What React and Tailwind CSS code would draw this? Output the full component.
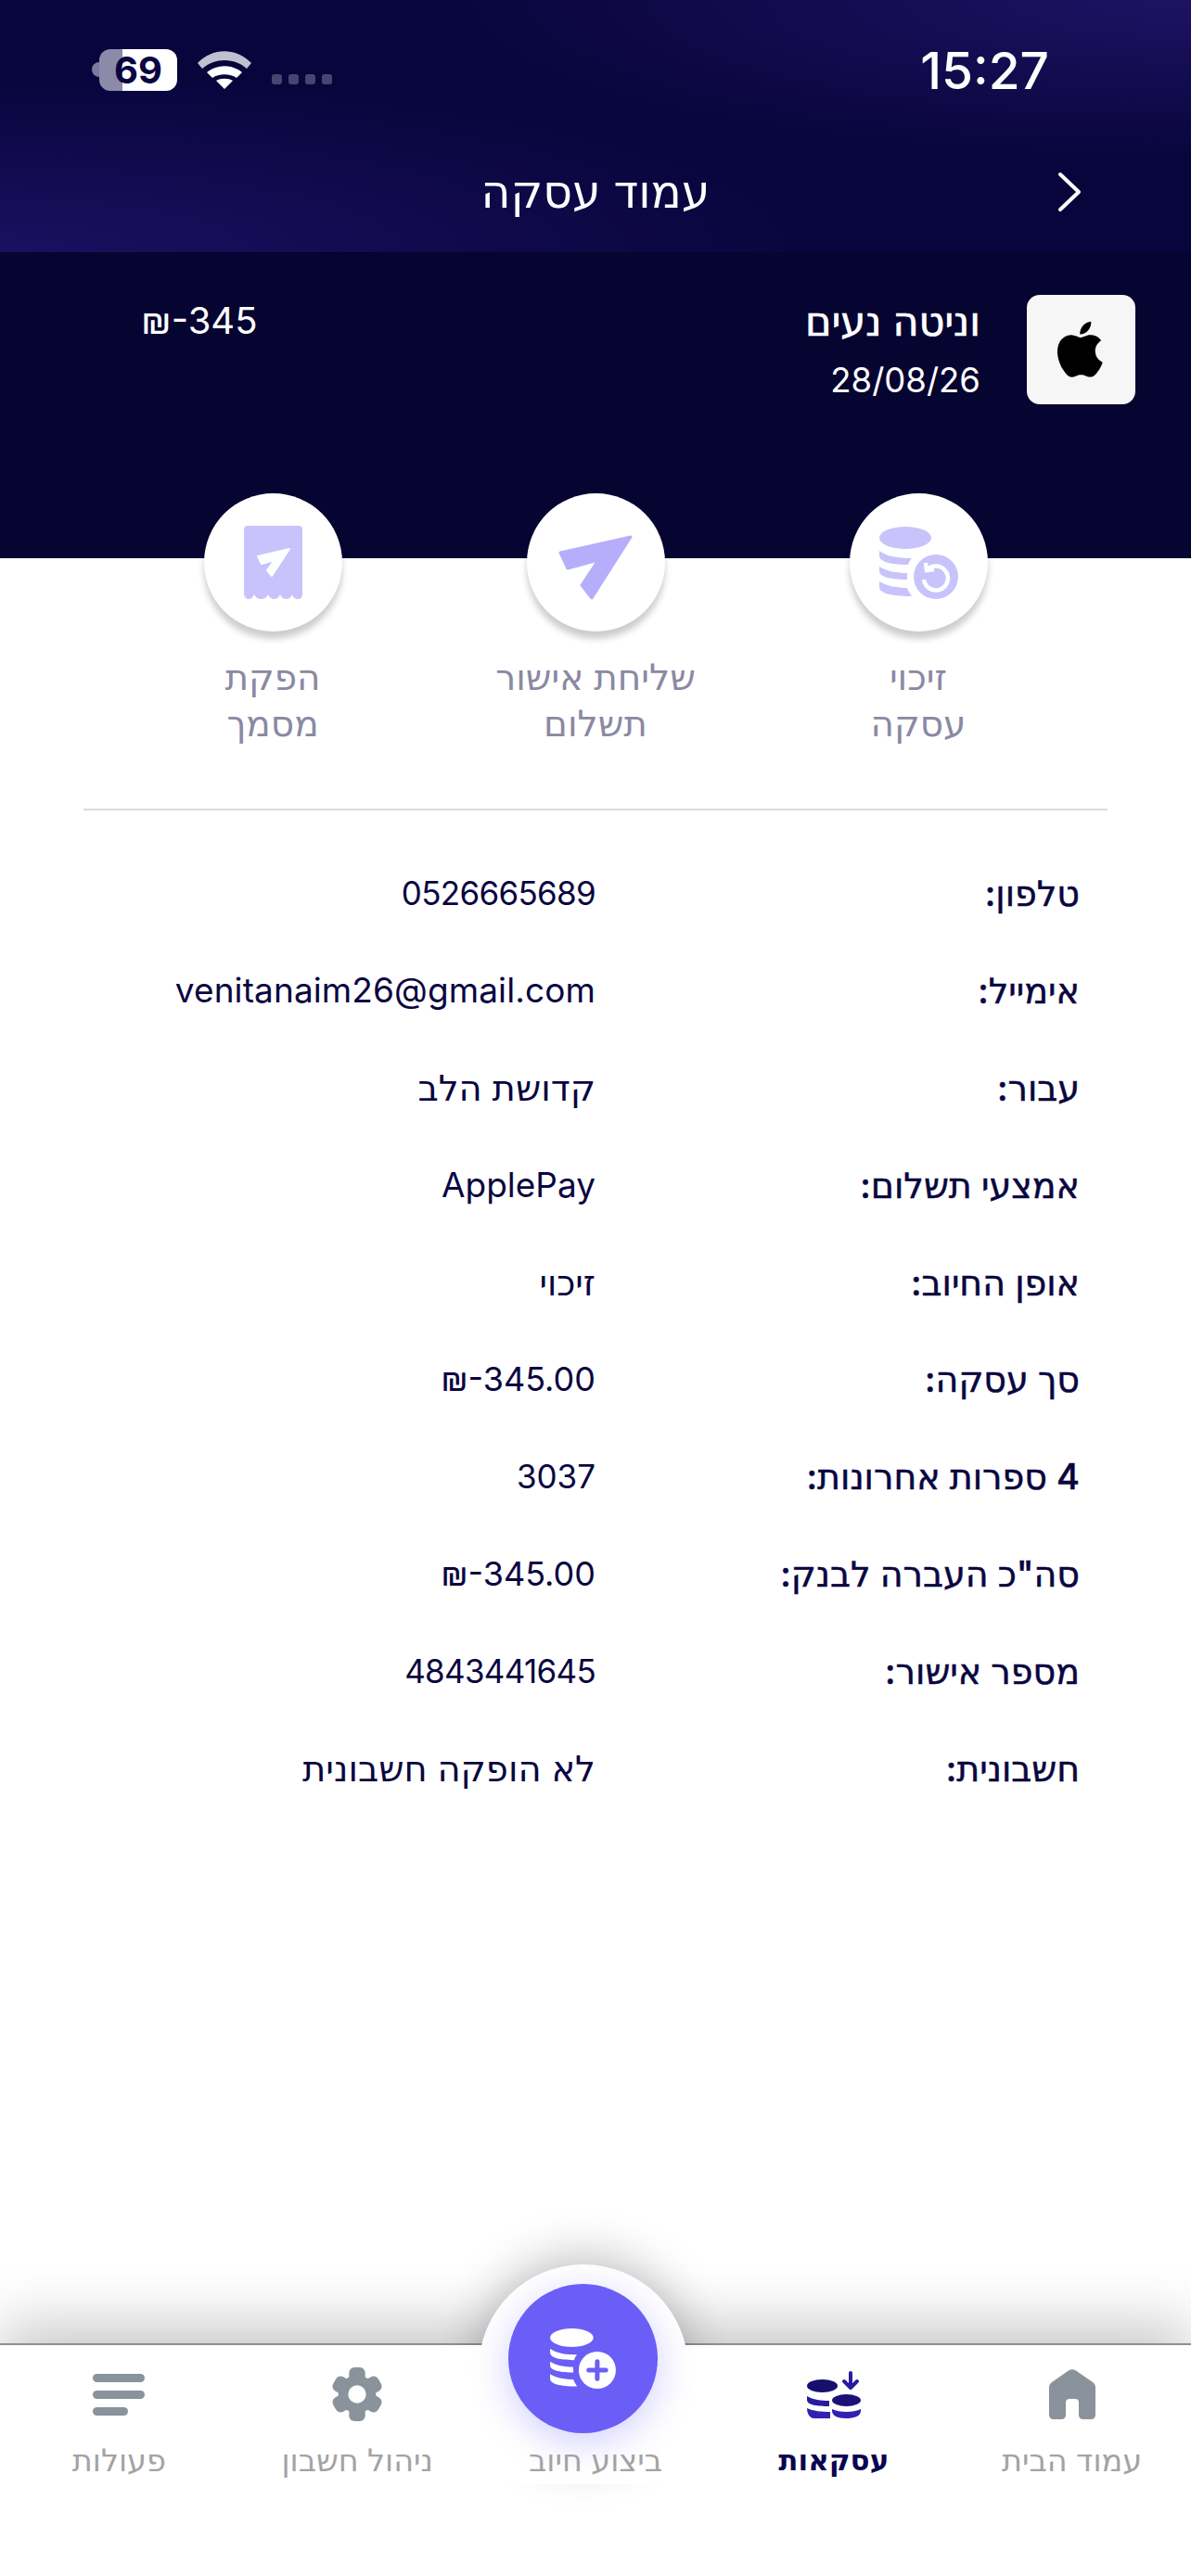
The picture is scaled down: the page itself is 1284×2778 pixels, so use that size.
import React from 'react';

const rows = [
  ['טלפון:', '0526665689', 'text-[35px] tracking-[-0.7px]'],
  ['אימייל:', 'venitanaim26@gmail.com', 'text-[37px] tracking-[0.1px]'],
  ['עבור:', 'קדושת הלב', 'text-[38.5px]'],
  ['אמצעי תשלום:', 'ApplePay', 'text-[37px]'],
  ['אופן החיוב:', 'זיכוי', 'text-[38px]'],
  ['סך עסקה:', '₪-345.00', 'text-[36px]'],
  ['4 ספרות אחרונות:', '3037', 'text-[35px]'],
  ['סה"כ העברה לבנק:', '₪-345.00', 'text-[36px]'],
  ['מספר אישור:', '4843441645', 'text-[35px] tracking-[-0.7px]'],
  ['חשבונית:', 'לא הופקה חשבונית', 'text-[38.5px]'],
];

function CoinsIcon({ color, className, children }) {
  return (
    <svg viewBox="0 0 85 78" className={className} fill={color}>
      <ellipse cx="28" cy="12" rx="28" ry="12" />
      <path d="M0 26C8 32 20 34 35 34c-2 2-3 4-4 7C16 41 0 39 0 31z" />
      <path d="M0 43c8 5 18 7 30 7v7C16 57 0 55 0 48z" />
      <path d="M0 59c8 5 20 7 30 7 1 3 3 6 5 9C18 75 0 73 0 65z" />
      {children}
    </svg>
  );
}

function Action({ icon, lines }) {
  return (
    <div className="w-[230px] flex flex-col items-center">
      <div className="w-[149px] h-[149px] rounded-full bg-white flex items-center justify-center shadow-[0_8px_7px_rgba(0,0,0,0.2)]">
        {icon}
      </div>
      <div className="mt-[24px] text-center text-[39px] leading-[50px] whitespace-nowrap text-[#8a89a3]">
        {lines.map((line) => (
          <div key={line}>{line}</div>
        ))}
      </div>
    </div>
  );
}

function NavItem({ icon, label, active }) {
  return (
    <div className="w-[257px] flex flex-col items-center">
      <div className="h-[60px] flex items-center justify-center">{icon}</div>
      <div className={active ? 'mt-[21px] text-[31px] leading-[40px] font-bold text-[#0b0550]' : 'mt-[21px] text-[33.5px] leading-[40px] text-[#a3a3a3]'}>
        {label}
      </div>
    </div>
  );
}

export default function App() {
  return (
    <div dir="rtl" className="relative w-[1284px] h-[2778px] overflow-hidden bg-white flex flex-col font-['Inter','DejaVu_Sans',sans-serif]">
      <div className="h-[272px] bg-[#08053c] bg-[radial-gradient(ellipse_at_top_right,#1e1263_0%,transparent_45%),radial-gradient(ellipse_at_bottom_left,#1a1060_0%,transparent_50%)] text-white">
        <div dir="ltr" className="h-[150px] pl-[99px] pr-[153px] flex items-center justify-between">
          <div className="flex items-center">
            <div className="w-[8px] h-[16px] rounded-l-full bg-[#7c7a9c]" />
            <div className="w-[84px] h-[45px] rounded-[12px] bg-[linear-gradient(to_right,#8b8aa8_25px,white_25px)] flex items-center justify-center">
              <span className="text-[40px] leading-[45px] font-bold text-[#0a0640]">69</span>
            </div>
            <svg viewBox="0 0 58 41" className="w-[58px] h-[41px] ml-[22px]" fill="white">
              <path opacity="0.75" d="M0 13C16 -4 42 -4 58 13l-5 6C39 7 19 7 5 19z" />
              <path d="M10 23c11-9 27-9 38 0l-6 6c-7-5-19-5-26 0z" />
              <path d="M20 32c5-3 13-3 18 0L29 41z" />
            </svg>
            <div className="flex gap-[7px] ml-[22px] mt-[21px]">
              <div className="w-[11px] h-[11px] rounded-[3px] bg-[#47446f]" />
              <div className="w-[11px] h-[11px] rounded-[3px] bg-[#47446f]" />
              <div className="w-[11px] h-[11px] rounded-[3px] bg-[#47446f]" />
              <div className="w-[11px] h-[11px] rounded-[3px] bg-[#47446f]" />
            </div>
          </div>
          <div className="mt-[3px] text-[55px] font-medium">15:27</div>
        </div>
        <div className="relative h-[114px] flex items-center justify-center">
          <span className="text-[49px] leading-[60px]">עמוד עסקה</span>
          <svg viewBox="0 0 26 44" className="absolute right-[118px] top-[35px] w-[26px] h-[44px]" fill="none" stroke="white" strokeWidth="4" strokeLinecap="round" strokeLinejoin="round">
            <path d="M3 3l20 19L3 41" />
          </svg>
        </div>
      </div>

      <div className="h-[330px] bg-[#060430] text-white pt-[46px] pr-[60px] pl-[152px] flex justify-between items-start">
        <div className="flex gap-[50px]">
          <div className="w-[117px] h-[118px] rounded-[14px] bg-[#f6f6f6] flex items-center justify-center">
            <svg viewBox="0 0 24 24" className="w-[70px] h-[70px]" fill="black">
              <path d="M17.05 12.54c-.03-2.6 2.12-3.85 2.22-3.91-1.21-1.77-3.09-2.01-3.76-2.04-1.6-.16-3.12.94-3.93.94-.81 0-2.06-.92-3.39-.89-1.74.03-3.35 1.01-4.25 2.57-1.81 3.14-.46 7.8 1.3 10.35.86 1.25 1.89 2.65 3.24 2.6 1.3-.05 1.79-.84 3.36-.84 1.57 0 2.01.84 3.39.81 1.4-.02 2.28-1.27 3.14-2.53.99-1.45 1.4-2.85 1.42-2.92-.03-.01-2.72-1.04-2.74-4.14zM14.46 4.9c.72-.87 1.2-2.07 1.07-3.27-1.03.04-2.28.69-3.02 1.55-.66.77-1.24 2-1.09 3.17 1.15.09 2.32-.58 3.04-1.45z" />
            </svg>
          </div>
          <div className="w-[190px]">
            <div className="text-[43px] leading-[56px] whitespace-nowrap [-webkit-text-stroke:0.7px_white]">וניטה נעים</div>
            <div dir="ltr" className="text-right mt-[11px] text-[36.5px] leading-[50px]">28/08/26</div>
          </div>
        </div>
        <div dir="ltr" className="text-[40px] leading-[56px]">₪-345</div>
      </div>

      <div className="-mt-[70px] relative flex justify-center gap-[118px]">
        <Action
          lines={['זיכוי', 'עסקה']}
          icon={
            <CoinsIcon color="#c8c3fb" className="w-[85px] h-[78px]">
              <circle cx="61" cy="54" r="24" />
              <g fill="none" stroke="white" strokeWidth="4.5">
                <path d="M52 46A13 13 0 1 1 48 57" />
                <path d="M50 39l1 8 8-1" />
              </g>
            </CoinsIcon>
          }
        />
        <Action
          lines={['שליחת אישור', 'תשלום']}
          icon={
            <svg viewBox="0 0 80 70" className="w-[80px] h-[70px] mt-[10px]" fill="#b7aefb" stroke="#b7aefb" strokeWidth="3" strokeLinejoin="round">
              <path d="M2 19L78 2 36 68 25 54 43 27 10 36z" />
            </svg>
          }
        />
        <Action
          lines={['הפקת', 'מסמך']}
          icon={
            <svg viewBox="0 0 63 79" className="w-[63px] h-[79px]" fill="#c8c3fb">
              <path d="M4 0H59a4 4 0 0 1 4 4V74q0 5-5 5t-6-5q-2 5-6.5 5T39 74q-2 5-6.5 5T26 74q-2 5-7.5 5T11 74q-2 5-6 5T0 74V4a4 4 0 0 1 4-4z" />
              <path fill="white" stroke="white" strokeWidth="2" strokeLinejoin="round" d="M15 33L49 25 30 54 25 48 33 37 19 41z" />
            </svg>
          }
        />
      </div>

      <div className="mx-[90px] mt-[67px] border-t-2 border-[#dcdce0]" />

      <div className="mt-[37px] pr-[120px] text-[36px] leading-[50px] text-[#0a0640]">
        {rows.map(([label, value, size]) => (
          <div key={label} className="flex h-[104.8px] items-center">
            <div className="w-[522px] text-[38px] font-medium [-webkit-text-stroke:0.5px_#0a0640]">{label}</div>
            <div className={size}>{value.includes('₪') || /^[0-9a-zA-Z]/.test(value) ? <span dir="ltr">{value}</span> : value}</div>
          </div>
        ))}
      </div>

      <div className="absolute left-0 right-0 bottom-0 h-[251px] bg-white border-t-2 border-[#8f8f8f] shadow-[0_-20px_60px_rgba(0,0,0,0.22)]">
        <div className="absolute left-[516px] -top-[87px] w-[226px] h-[226px] rounded-full bg-white shadow-[0_-12px_50px_rgba(0,0,0,0.22)]" />
        <div className="absolute left-0 right-0 top-0 h-[150px] bg-white" />
        <div className="absolute left-[548px] -top-[66px] w-[161px] h-[161px] rounded-full bg-[#6a5ef7] shadow-[0_10px_40px_rgba(106,94,247,0.3)] flex items-center justify-center">
          <CoinsIcon color="white" className="w-[71px] h-[65px]">
            <circle cx="61" cy="54" r="24" />
            <path d="M61 43v22M50 54h22" fill="none" stroke="#6a5ef7" strokeWidth="6" strokeLinecap="round" />
          </CoinsIcon>
        </div>
        <div className="relative flex pt-[23px]">
          <NavItem
            label="עמוד הבית"
            icon={
              <svg viewBox="0 0 50 54" className="w-[50px] h-[54px]" fill="#8a929c">
                <path d="M21 1.5Q25-1 29 1.5L47 14Q50 16 50 20V49Q50 54 45 54H37Q32 54 32 49V36Q32 32 28 32H22Q18 32 18 36V49Q18 54 13 54H5Q0 54 0 49V20Q0 16 3 14Z" />
              </svg>
            }
          />
          <NavItem
            active
            label="עסקאות"
            icon={
              <svg viewBox="0 0 58 51" className="w-[58px] h-[51px]">
                <ellipse cx="16.5" cy="16" rx="16.5" ry="7" fill="#170f6e" />
                <ellipse cx="42.5" cy="31.5" rx="15.5" ry="6.5" fill="#1b1279" />
                <path d="M0 27c6 4 16 5 24 5v6C12 38 0 37 0 31z" fill="#2a1a9f" />
                <path d="M0 40c6 3 16 4 25 4v7H8c-5 0-8-5-8-11z" fill="#3220b5" />
                <path d="M27 41c8 4 23 4 31 0v2c0 6-8 8-16 8-9 0-15-3-15-8z" fill="#3220b5" />
                <path d="M47 2v15M40 11l7 7 7-7" fill="none" stroke="#2a1a9f" strokeWidth="4" strokeLinecap="round" strokeLinejoin="round" />
              </svg>
            }
          />
          <NavItem label="ביצוע חיוב" icon={<div className="w-[52px] h-[52px]" />} />
          <NavItem
            label="ניהול חשבון"
            icon={
              <svg viewBox="0 0 60 60" className="w-[58px] h-[60px]" fill="#8a929c">
                <circle cx="30" cy="30" r="21" />
                <rect x="21" y="0" width="18" height="60" rx="6" />
                <rect x="21" y="1" width="18" height="58" rx="6" transform="rotate(60 30 30)" />
                <rect x="21" y="1" width="18" height="58" rx="6" transform="rotate(120 30 30)" />
                <circle cx="30" cy="30" r="10" fill="white" />
              </svg>
            }
          />
          <NavItem
            label="פעולות"
            icon={
              <div className="flex flex-col gap-[9px] items-end w-[56px]">
                <div className="w-[56px] h-[9px] rounded-full bg-[#8a929c]" />
                <div className="w-[56px] h-[9px] rounded-full bg-[#8a929c]" />
                <div className="w-[38px] h-[9px] rounded-full bg-[#8a929c]" />
              </div>
            }
          />
        </div>
      </div>
    </div>
  );
}
